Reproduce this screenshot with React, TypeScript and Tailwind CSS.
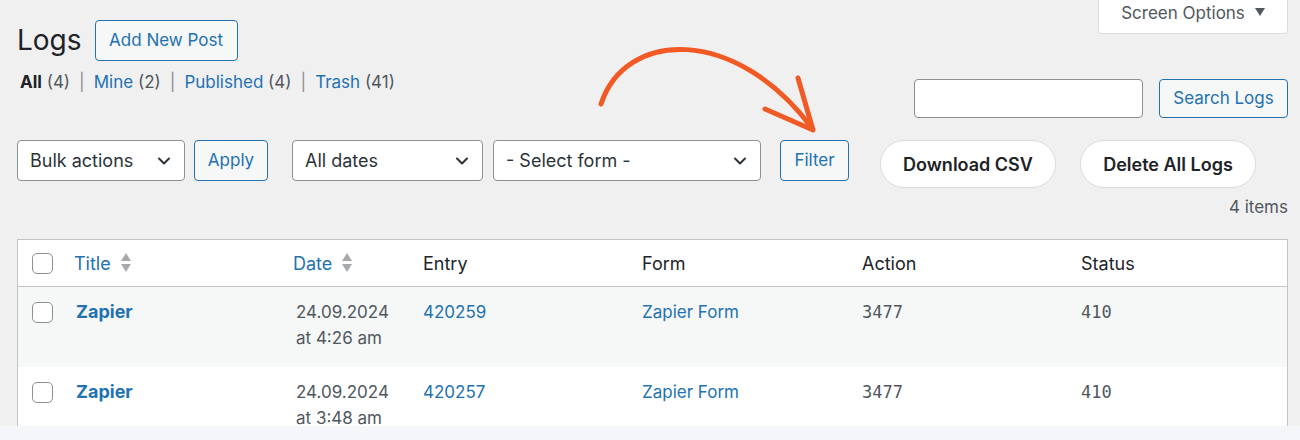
import { ChevronDown } from "lucide-react";

const rows = [
  { title: "Zapier", date: "24.09.2024", time: "at 4:26 am", entry: "420259", form: "Zapier Form", action: "3477", status: "410" },
  { title: "Zapier", date: "24.09.2024", time: "at 3:48 am", entry: "420257", form: "Zapier Form", action: "3477", status: "410" },
];

const cols = "grid grid-cols-[56px_219px_130px_219px_220px_219px_1fr]";

function Checkbox() {
  return <span className="block h-[21px] w-[21px] rounded-[5px] border border-[#8c8f94] bg-white" />;
}

function SortIcon() {
  return (
    <svg width="10" height="20" viewBox="0 0 10 20" className="ml-[10px]">
      <path d="M5 0 L10 8 L0 8 Z" fill="#a7aaad" />
      <path d="M0 11 L10 11 L5 19 Z" fill="#a7aaad" />
    </svg>
  );
}

function Select({ label, width }: { label: string; width: string }) {
  return (
    <div className={`flex h-[41px] items-center justify-between rounded-[4px] border border-[#8c8f94] bg-white pl-[12px] pr-[10px] text-[18px] text-[#2c3338] ${width}`}>
      <span>{label}</span>
      <ChevronDown size={20} strokeWidth={2.4} className="text-[#2c3338]" />
    </div>
  );
}

function SecondaryButton({ label, width }: { label: string; width: string }) {
  return (
    <button className={`flex h-[41px] items-center justify-center rounded-[4px] border border-[#2271b1] bg-[#f6f7f7] text-[17px] text-[#2271b1] ${width}`}>
      {label}
    </button>
  );
}

function PillButton({ label }: { label: string }) {
  return (
    <button className="flex h-[48px] w-[176px] items-center justify-center rounded-full border border-[#dcdcde] bg-white text-[18px] font-semibold text-[#1d2327]">
      {label}
    </button>
  );
}

export default function App() {
  return (
    <div className="flex h-[440px] w-[1300px] flex-col font-[Inter,sans-serif]">
      <div className="relative h-[426px] overflow-hidden bg-[#f0f0f1] pl-[17px] pr-[12px]">
        {/* Screen options tab */}
        <div className="float-right flex h-[34px] w-[190px] items-start justify-center gap-[10px] rounded-b-[4px] border border-t-0 border-[#dcdcde] bg-white text-[17px] leading-[26px] text-[#50575e]">
          <span>Screen Options</span>
          <span className="mt-[8px] h-0 w-0 border-x-[5px] border-t-[8px] border-x-transparent border-t-[#50575e]" />
        </div>

        <div className="flex items-center gap-[13px] pt-[20px]">
          <h1 className="text-[28px] leading-[41px] text-[#1d2327]">Logs</h1>
          <SecondaryButton label="Add New Post" width="w-[143px]" />
        </div>

        <div className="mt-[8px] flex items-start justify-between">
          <ul className="ml-[3px] flex items-center text-[17px] leading-[26px] text-[#50575e]">
            <li>
              <span className="font-bold text-[#1d2327]">All</span> (4)
            </li>
            <li className="px-[9px] text-[#8c8f94]">|</li>
            <li>
              <span className="text-[#2271b1]">Mine</span> (2)
            </li>
            <li className="px-[9px] text-[#8c8f94]">|</li>
            <li>
              <span className="text-[#2271b1]">Published</span> (4)
            </li>
            <li className="px-[9px] text-[#8c8f94]">|</li>
            <li>
              <span className="text-[#2271b1]">Trash</span> (41)
            </li>
          </ul>
          <div className="mt-[10px] flex items-center gap-[16px]">
            <div className="h-[39px] w-[229px] rounded-[4px] border border-[#8c8f94] bg-white" />
            <button className="flex h-[39px] w-[129px] items-center justify-center rounded-[4px] border border-[#2271b1] bg-[#f6f7f7] text-[17px] text-[#2271b1]">
              Search Logs
            </button>
          </div>
        </div>

        <div className="mt-[22px] flex items-start">
          <Select label="Bulk actions" width="w-[168px]" />
          <div className="ml-[9px]">
            <SecondaryButton label="Apply" width="w-[74px]" />
          </div>
          <div className="ml-[24px]">
            <Select label="All dates" width="w-[191px]" />
          </div>
          <div className="ml-[10px]">
            <Select label="- Select form -" width="w-[268px]" />
          </div>
          <div className="ml-[19px]">
            <SecondaryButton label="Filter" width="w-[69px]" />
          </div>
          <div className="ml-[31px] flex gap-[24px]">
            <PillButton label="Download CSV" />
            <PillButton label="Delete All Logs" />
          </div>
        </div>

        <div className="mt-[6px] text-right text-[17px] leading-[26px] text-[#50575e]">4 items</div>

        <div className="mt-[19px] border border-[#c3c4c7] bg-white">
          <div className={`${cols} h-[47px] items-center border-b border-[#c3c4c7] text-[18px] text-[#1d2327]`}>
            <div className="pl-[14px]">
              <Checkbox />
            </div>
            <div className="flex items-center text-[#2271b1]">
              Title
              <SortIcon />
            </div>
            <div className="flex items-center text-[#2271b1]">
              Date
              <SortIcon />
            </div>
            <div>Entry</div>
            <div>Form</div>
            <div>Action</div>
            <div>Status</div>
          </div>
          {rows.map((r, i) => (
            <div
              key={r.entry}
              className={`${cols} h-[80px] items-start pt-[12px] text-[17px] leading-[26px] ${i % 2 === 0 ? "bg-[#f6f7f7]" : "bg-white"}`}
            >
              <div className="pl-[14px] pt-[3px]">
                <Checkbox />
              </div>
              <div className="pl-[2px] text-[18px] font-bold text-[#2271b1]">{r.title}</div>
              <div className="pl-[3px] text-[#50575e]">
                <div>{r.date}</div>
                <div>{r.time}</div>
              </div>
              <div className="text-[#2271b1]">{r.entry}</div>
              <div className="text-[#2271b1]">{r.form}</div>
              <div className="font-['DejaVu_Sans_Mono',monospace] text-[17px] text-[#50575e]">{r.action}</div>
              <div className="font-['DejaVu_Sans_Mono',monospace] text-[17px] text-[#50575e]">{r.status}</div>
            </div>
          ))}
        </div>

        {/* hand-drawn arrow pointing at Filter */}
        <svg
          className="pointer-events-none absolute left-[590px] top-[40px] h-[100px] w-[240px]"
          viewBox="590 40 240 100"
        >
          <path
            d="M601 104 C 625 30, 735 25, 812 128"
            fill="none"
            stroke="#f15a24"
            strokeWidth="5"
            strokeLinecap="round"
          />
          <path
            d="M798 78 L813 130 L765 109"
            fill="none"
            stroke="#f15a24"
            strokeWidth="5"
            strokeLinecap="round"
            strokeLinejoin="round"
          />
        </svg>
      </div>
      <div className="h-[14px] bg-[#f5f6fa]" />
    </div>
  );
}
